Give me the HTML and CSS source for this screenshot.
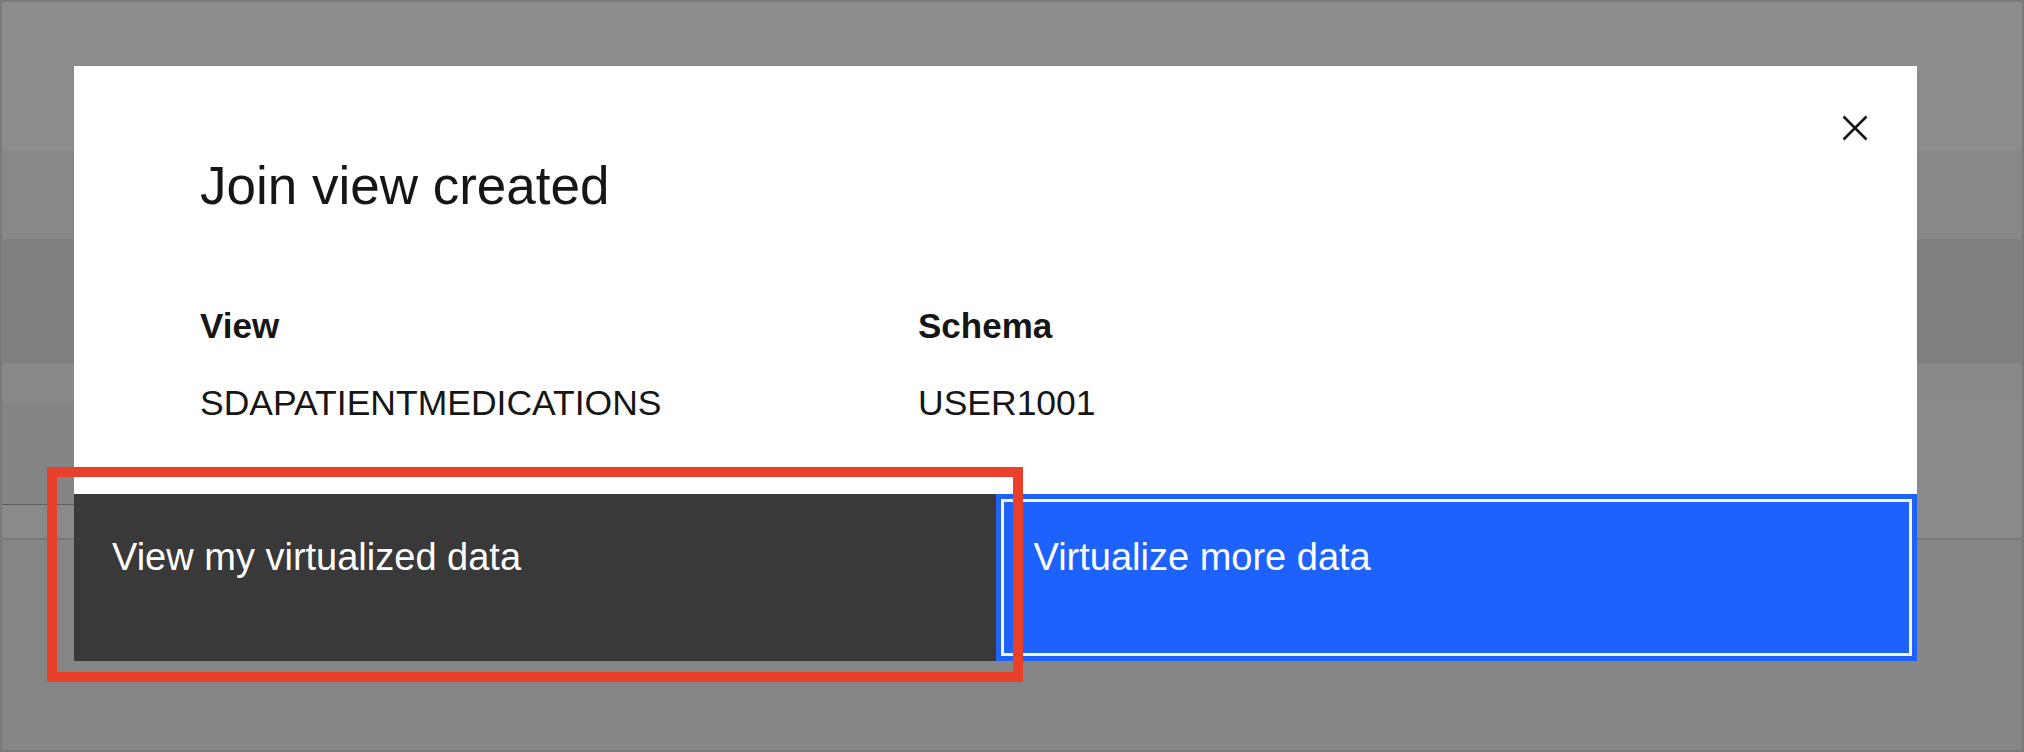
FILE: index.html
```html
<!DOCTYPE html>
<html lang="en">
<head>
<meta charset="utf-8">
<title>Join view created</title>
<link rel="stylesheet" href="styles.css">
</head>
<body>
<div class="page">
  <div class="band band-1"></div>
  <div class="band band-2"></div>
  <div class="band band-3"></div>
  <div class="band band-4"></div>
  <div class="band band-5">
    <div class="row-cell"></div>
  </div>
  <div class="band band-6"></div>
  <div class="band band-7"></div>

  <div class="overlay">
    <div class="modal" role="dialog" aria-labelledby="modal-title">
      <div class="modal-header">
        <h2 class="modal-title" id="modal-title">Join view created</h2>
        <button class="modal-close" type="button" aria-label="Close">
          <svg class="close-icon" viewBox="0 0 26 26" width="26" height="26" aria-hidden="true">
            <path d="M1.5 1.5 L24.5 24.5 M24.5 1.5 L1.5 24.5" stroke="#161616" stroke-width="2.6" fill="none"/>
          </svg>
        </button>
      </div>
      <div class="modal-body">
        <div class="field">
          <div class="field-label">View</div>
          <div class="field-value">SDAPATIENTMEDICATIONS</div>
        </div>
        <div class="field">
          <div class="field-label">Schema</div>
          <div class="field-value">USER1001</div>
        </div>
      </div>
      <div class="modal-footer">
        <button class="btn btn-secondary" type="button"><span class="btn-label">View my virtualized data</span></button>
        <button class="btn btn-primary" type="button"><span class="btn-label">Virtualize more data</span></button>
      </div>
    </div>
  </div>

  <div class="annotation"></div>
</div>
</body>
</html>
```

FILE: styles.css
```css
* {
  box-sizing: border-box;
}

html, body {
  margin: 0;
  padding: 0;
  width: 2024px;
  height: 752px;
  overflow: hidden;
  font-family: "Liberation Sans", Arial, sans-serif;
  background: #7b7b7b;
}

.page {
  position: relative;
  width: 2024px;
  height: 752px;
  border: 2px solid #7a7a7a;
  background: #868686;
  display: flex;
  flex-direction: column;
}

.band {
  width: 100%;
  flex: none;
}

.band-1 { height: 149px; background: #8c8c8c; }
.band-2 { height: 88px; background: #888888; }
.band-3 { height: 124px; background: #7f7f7f; }
.band-4 { height: 39px; background: #898989; }
.band-5 {
  height: 103px;
  background: #8a8a8a;
  display: flex;
}
.row-cell {
  width: 400px;
  height: 103px;
  background: #858585;
  border-bottom: 1px solid #5e5e5e;
}
.band-6 {
  height: 35px;
  background: #8a8a8a;
  border-bottom: 2px solid #797979;
}
.band-7 {
  flex: 1;
  background: #868686;
}

.overlay {
  position: absolute;
  inset: 0;
  padding: 64px 105px 89px 72px;
  display: flex;
}

.modal {
  width: 1843px;
  height: 595px;
  background: #ffffff;
  display: flex;
  flex-direction: column;
  color: #161616;
}

.modal-header {
  display: flex;
  align-items: flex-start;
  justify-content: space-between;
}

.modal-title {
  margin: 88px 0 0 126px;
  font-size: 53px;
  line-height: 64px;
  font-weight: 400;
  color: #161616;
}

.modal-close {
  width: 125px;
  height: 124px;
  border: 0;
  padding: 0;
  background: transparent;
  display: flex;
  align-items: center;
  justify-content: center;
}

.close-icon {
  display: block;
}

.modal-body {
  display: grid;
  grid-template-columns: 718px 1fr;
  padding-left: 126px;
  margin-top: 86px;
}

.field-label {
  font-size: 35px;
  line-height: 44px;
  font-weight: 700;
}

.field-value {
  margin-top: 33px;
  font-size: 35.5px;
  line-height: 44px;
  font-weight: 400;
}

.modal-footer {
  margin-top: auto;
  height: 167px;
  display: flex;
}

.btn {
  flex: 1;
  height: 167px;
  border: 0;
  margin: 0;
  padding: 40px 38px 0 38px;
  display: flex;
  align-items: flex-start;
  justify-content: flex-start;
  text-align: left;
  font-family: "Liberation Sans", Arial, sans-serif;
  font-size: 38px;
  line-height: 46px;
  font-weight: 400;
  color: #ffffff;
}

.btn-label {
  display: block;
}

.btn-secondary {
  background: #393939;
}

.btn-primary {
  background: #1e62fe;
  box-shadow: inset 0 0 0 5px #1e62fe, inset 0 0 0 8px #f4f4f4;
}

.annotation {
  position: absolute;
  left: 45px;
  top: 465px;
  width: 976px;
  height: 215px;
  border: 10px solid #e8402b;
}
```
